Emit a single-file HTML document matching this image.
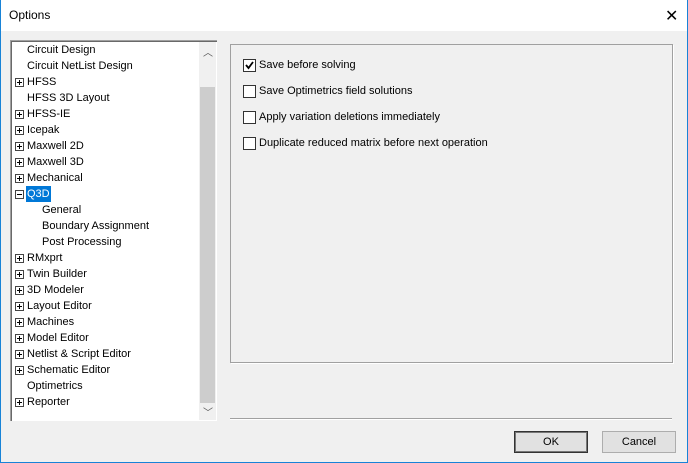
<!DOCTYPE html>
<html><head><style>
body{margin:0;width:688px;height:463px;overflow:hidden;font-family:"Liberation Sans",sans-serif;font-size:11px;color:#000}
.win{position:absolute;left:0;top:0;width:686px;height:462px;border:1px solid #1883d7;border-top:none;background:#f0f0f0}
.title{position:absolute;left:0;top:0;width:686px;height:31px;background:#fff}
.title span{position:absolute;left:8px;top:8px;font-size:12px}
.x{position:absolute;left:664px;top:6px;font-size:16px}
.tree{position:absolute;left:9px;top:40px;width:206px;height:380px;background:#fff;border-left:1px solid #a0a0a0;border-top:1px solid #a0a0a0;box-shadow:inset 1px 1px 0 #696969}
.sb{position:absolute;left:188px;top:1px;width:17px;height:378px;background:#f0f0f0}
.thumb{position:absolute;left:1px;top:45px;width:15px;height:316px;background:#cdcdcd}
.it{position:absolute;height:16px;line-height:16px;white-space:nowrap}
.pl{position:absolute;width:7px;height:7px;border:1px solid #444;}
.pl:before{content:"";position:absolute;left:1px;top:3px;width:5px;height:1px;background:#000}
.pl.p:after{content:"";position:absolute;left:3px;top:1px;width:1px;height:5px;background:#000}
.grp{position:absolute;left:229px;top:44px;width:441px;height:317px;border:1px solid #a0a0a0;box-shadow:1px 1px 0 #fff}
.cb{position:absolute;left:242px;width:11px;height:11px;border:1px solid #333;background:#fff}
.lb{position:absolute;left:258px}
.btn{position:absolute;top:431px;width:72px;height:20px;border:1px solid #adadad;background:#e1e1e1;text-align:center;line-height:20px}
</style></head><body>
<div class="win">
<div class="title"><span>Options</span><div class="x">✕</div></div>
<div class="tree">
<div class="sb"><div style="position:absolute;left:4px;top:2px;font-size:10px;color:#555">︿</div><div class="thumb"></div><div style="position:absolute;left:4px;top:362px;font-size:10px;color:#555">﹀</div></div>
</div>
<div class="grp"></div>
<div style="position:absolute;left:229px;top:418px;width:442px;height:1px;background:#a0a0a0;box-shadow:0 1px 0 #fff"></div>
<div class="cb" style="top:59px"><svg width="11" height="11"><path d="M2 5 L4.5 8 L9 2" stroke="#000" stroke-width="1.8" fill="none"/></svg></div>
<div class="lb" style="top:59px">Save before solving</div>
<div class="cb" style="top:85px"></div><div class="lb" style="top:85px">Save Optimetrics field solutions</div>
<div class="cb" style="top:111px"></div><div class="lb" style="top:111px">Apply variation deletions immediately</div>
<div class="cb" style="top:137px"></div><div class="lb" style="top:137px">Duplicate reduced matrix before next operation</div>
<div class="btn" style="left:513px;border:1px solid #333;box-shadow:inset 0 0 0 1px #777">OK</div>
<div class="btn" style="left:601px">Cancel</div>
</div>
<div style="position:absolute;left:0;top:1px">
<div class="it" style="left:27px;top:41px">Circuit Design</div>
<div class="it" style="left:27px;top:57px">Circuit NetList Design</div>
<div class="pl p" style="left:15px;top:77px"></div><div class="it" style="left:27px;top:73px">HFSS</div>
<div class="it" style="left:27px;top:89px">HFSS 3D Layout</div>
<div class="pl p" style="left:15px;top:109px"></div><div class="it" style="left:27px;top:105px">HFSS-IE</div>
<div class="pl p" style="left:15px;top:125px"></div><div class="it" style="left:27px;top:121px">Icepak</div>
<div class="pl p" style="left:15px;top:141px"></div><div class="it" style="left:27px;top:137px">Maxwell 2D</div>
<div class="pl p" style="left:15px;top:157px"></div><div class="it" style="left:27px;top:153px">Maxwell 3D</div>
<div class="pl p" style="left:15px;top:173px"></div><div class="it" style="left:27px;top:169px">Mechanical</div>
<div class="pl" style="left:15px;top:189px"></div><div class="it" style="left:26px;top:185px;background:#0078d7;color:#fff;padding:0 1px">Q3D</div>
<div class="it" style="left:42px;top:201px">General</div>
<div class="it" style="left:42px;top:217px">Boundary Assignment</div>
<div class="it" style="left:42px;top:233px">Post Processing</div>
<div class="pl p" style="left:15px;top:253px"></div><div class="it" style="left:27px;top:249px">RMxprt</div>
<div class="pl p" style="left:15px;top:269px"></div><div class="it" style="left:27px;top:265px">Twin Builder</div>
<div class="pl p" style="left:15px;top:285px"></div><div class="it" style="left:27px;top:281px">3D Modeler</div>
<div class="pl p" style="left:15px;top:301px"></div><div class="it" style="left:27px;top:297px">Layout Editor</div>
<div class="pl p" style="left:15px;top:317px"></div><div class="it" style="left:27px;top:313px">Machines</div>
<div class="pl p" style="left:15px;top:333px"></div><div class="it" style="left:27px;top:329px">Model Editor</div>
<div class="pl p" style="left:15px;top:349px"></div><div class="it" style="left:27px;top:345px">Netlist &amp; Script Editor</div>
<div class="pl p" style="left:15px;top:365px"></div><div class="it" style="left:27px;top:361px">Schematic Editor</div>
<div class="it" style="left:27px;top:377px">Optimetrics</div>
<div class="pl p" style="left:15px;top:397px"></div><div class="it" style="left:27px;top:393px">Reporter</div>
</div>
</body></html>
